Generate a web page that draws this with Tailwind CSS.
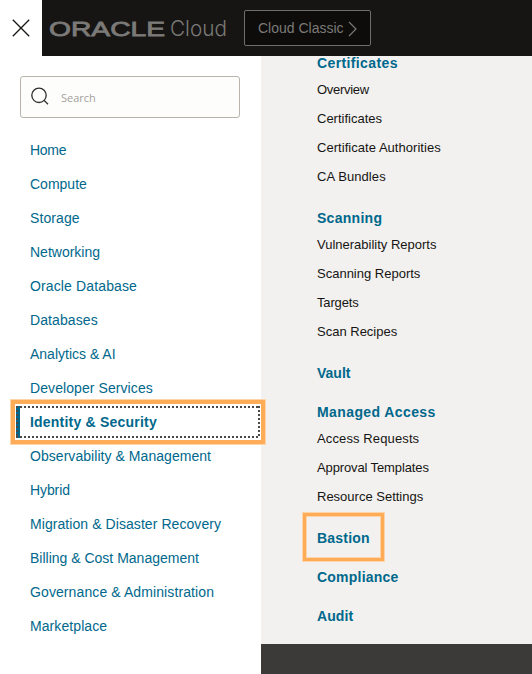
<!DOCTYPE html>
<html lang="en">
<head>
<meta charset="utf-8">
<title>Oracle Cloud</title>
<script src="https://cdn.jsdelivr.net/npm/@tailwindcss/browser@4"></script>
</head>
<body class="w-[532px] h-[674px] overflow-hidden bg-white font-['Liberation_Sans',Arial,sans-serif] flex flex-col">
<header class="flex h-14 shrink-0 bg-[#161513]">
  <button class="w-[42px] h-14 bg-white flex items-center justify-center" aria-label="Close">
    <svg width="18" height="18" viewBox="0 0 18 18" fill="none" stroke="#161513" stroke-width="1.3"><path d="M.8.8 17.2 17.2M17.2.8.8 17.2"/></svg>
  </button>
  <svg class="ml-[7px] shrink-0" width="180" height="56" fill="#7b7a78">
    <text x="0" y="36" font-family="Liberation Sans, Arial, sans-serif" font-size="21" stroke="#7b7a78" stroke-width=".8" textLength="116" lengthAdjust="spacingAndGlyphs">ORACLE</text>
    <text x="121" y="36" font-family="Inter, sans-serif" font-weight="300" font-size="22" textLength="57" lengthAdjust="spacingAndGlyphs">Cloud</text>
  </svg>
  <button class="ml-[15px] mt-[10px] w-[127px] h-9 rounded-[2px] border border-[#6f6e6c] bg-[#0d0c0a] text-[#7b7a78] text-sm flex items-center pl-[13px]">
    <span class="w-[86px] text-left whitespace-nowrap">Cloud Classic</span>
    <svg class="ml-[4px] mt-[2px]" width="9" height="16" viewBox="0 0 9 16" fill="none" stroke="#7b7a78" stroke-width="1.2"><path d="M1 1 8 8 1 15"/></svg>
  </button>
</header>
<div class="flex flex-1 min-h-0">
  <aside class="w-[261px] shrink-0 pt-5">
    <div class="ml-5 w-[220px] h-[42px] rounded-[3px] border border-[#b9b4ab] bg-[#fdfdfb] flex items-center">
      <svg class="ml-[10px] -mt-[2px]" width="18" height="18" viewBox="0 0 18 18" fill="none" stroke="#302f2d" stroke-width="1.3"><circle cx="8" cy="8.3" r="7.2"/><path d="m13 13.3 4 4"/></svg>
      <span class="ml-3 mt-[2px] font-['Open_Sans',sans-serif] text-[11px] text-[#a3a19e]">Search</span>
    </div>
    <nav class="mt-[15px] text-sm leading-[34px] text-[#00688c] whitespace-nowrap *:block *:h-[34px] *:pl-[30px]">
      <a class="tracking-[-0.3px]">Home</a><a>Compute</a><a class="tracking-[0.1px]">Storage</a><a>Networking</a><a class="tracking-[0.13px]">Oracle Database</a><a class="tracking-[0.1px]">Databases</a><a>Analytics &amp; AI</a><a class="tracking-[0.08px]">Developer Services</a>
      <a class="relative font-bold">
        <span class="absolute left-[10px] -top-[6px] w-[256px] h-[46px] border-[6px] border-[#ffd4a8]"></span>
        <span class="absolute left-[11px] -top-[5px] w-[254px] h-[44px] border-[4px] border-[#ffac59] bg-white"></span>
        <svg class="absolute left-4 top-px" width="245" height="32"><rect width="4" height="32" fill="#00688c"/><path d="M0 1H244M0 31H244M1 0V32M243 0V32" fill="none" stroke="#4b4947" stroke-width="2" stroke-dasharray="2 2"/></svg>
        <span class="absolute left-[30px] top-0 tracking-[0.21px]">Identity &amp; Security</span>
      </a>
      <a class="tracking-[0.05px]">Observability &amp; Management</a><a class="tracking-[-0.1px]">Hybrid</a><a class="tracking-[0.07px]">Migration &amp; Disaster Recovery</a><a>Billing &amp; Cost Management</a><a class="tracking-[0.1px]">Governance &amp; Administration</a><a class="tracking-[0.08px]">Marketplace</a>
    </nav>
  </aside>
  <main class="flex-1 bg-[#f2f1ef] flex flex-col">
    <div class="pl-14 h-[588px] -mt-[4px] [clip-path:inset(4px_0_0_0)] text-[13px] text-[#161513] whitespace-nowrap [&_h2]:text-sm [&_h2]:font-bold [&_h2]:text-[#00688c] [&_h2]:leading-[23px] [&_p]:leading-[29px]">
      <section class="mb-4"><h2 class="tracking-[0.38px]">Certificates</h2><p class="tracking-[-0.3px]">Overview</p><p>Certificates</p><p class="tracking-[0.04px]">Certificate Authorities</p><p class="tracking-[0.08px]">CA Bundles</p></section>
      <section class="mb-4"><h2 class="tracking-[0.28px]">Scanning</h2><p>Vulnerability Reports</p><p>Scanning Reports</p><p class="tracking-[-0.15px]">Targets</p><p>Scan Recipes</p></section>
      <section class="mb-4"><h2>Vault</h2></section>
      <section class="mb-4"><h2 class="tracking-[0.4px]">Managed Access</h2><p class="tracking-[0.12px]">Access Requests</p><p class="tracking-[-0.12px]">Approval Templates</p><p>Resource Settings</p></section>
      <section class="mb-4 relative"><h2 class="tracking-[0.2px]">Bastion</h2>
        <span class="absolute -left-[15px] -top-[15px] w-[83px] h-[50px] border-[5px] border-[#ffd4a8]"></span>
        <span class="absolute -left-[14px] -top-[14px] w-[81px] h-[48px] border-[3px] border-[#ffac59]"></span>
      </section>
      <section class="mb-4"><h2 class="tracking-[0.22px]">Compliance</h2></section>
      <section><h2 class="tracking-[0.1px]">Audit</h2></section>
    </div>
    <footer class="mt-[4px] flex-1 bg-[#3c3a38]"></footer>
  </main>
</div>
</body>
</html>
